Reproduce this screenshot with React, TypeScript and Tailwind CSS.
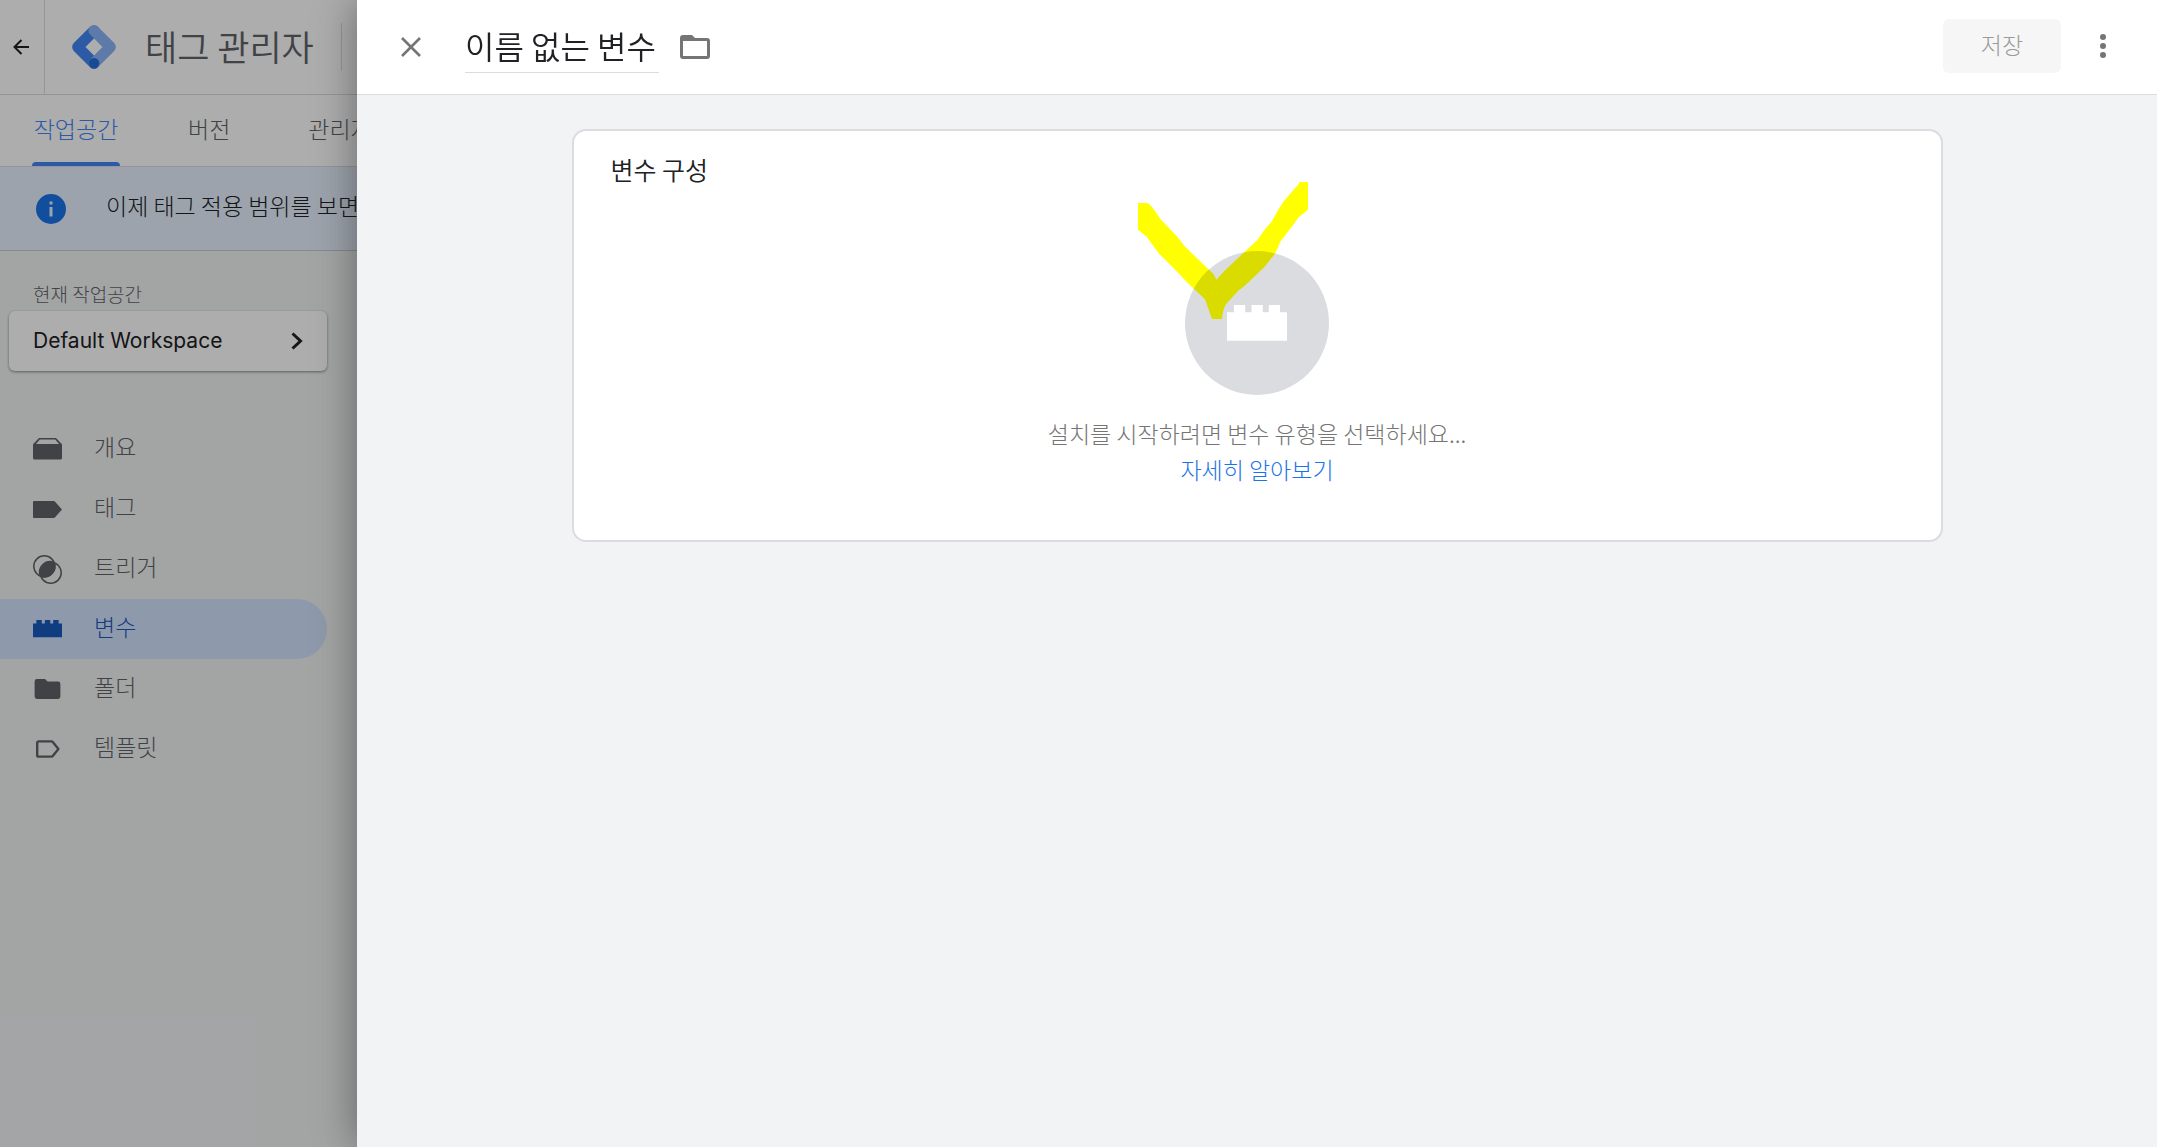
import { useState } from "react";
import type { ReactNode } from "react";

type navItem = {
    label : string,
    icon : ReactNode
}

const BrickIcon = ({ className } : { className : string }) => (
    <svg className={className} viewBox="0 0 181 108" fill="currentColor" aria-hidden="true">
        <path d="M0 22H21V0H55V22H74V0H108V22H126V0H160V22H181V108H0Z" />
    </svg>
)

const TagManagerLogo = () => (
    <svg className="size-11" viewBox="0 0 132 132" fill="none" strokeWidth="33" strokeLinecap="round" strokeLinejoin="round" aria-hidden="true">
        <path d="M66 17L17 66L66 115" stroke="#4285f4" />
        <path d="M66 17L115 66L66 115" stroke="#8ab4f8" />
        <circle cx="66" cy="115" r="16" fill="#246fdb" />
    </svg>
)

const navItems : navItem[] = [
    {
        label: "개요",
        icon: (
            <svg className="w-[29px]" viewBox="0 0 29 22" fill="currentColor" aria-hidden="true">
                <path d="M6 0H23L29 6.3V20a1.5 1.5 0 0 1-1.5 1.5h-26A1.5 1.5 0 0 1 0 20V6.3ZM6.8 1.5L3 6H26L22.2 1.5Z" fillRule="evenodd" />
            </svg>
        )
    },
    {
        label: "태그",
        icon: (
            <svg className="w-[29px]" viewBox="0 0 29 17" fill="currentColor" aria-hidden="true">
                <path d="M1 0H20.5a2 2 0 0 1 1.6.8L29 8.5L22.1 16.2a2 2 0 0 1-1.6.8H1a1 1 0 0 1-1-1V1a1 1 0 0 1 1-1Z" />
            </svg>
        )
    },
    {
        label: "트리거",
        icon: (
            <svg className="w-[29px]" viewBox="0 0 29 29" fill="none" stroke="currentColor" strokeWidth="1.5" aria-hidden="true">
                <circle cx="11.3" cy="11.3" r="10.5" />
                <circle cx="17.7" cy="17.7" r="10.5" />
                <path d="M7.4 21.1A10.5 10.5 0 0 1 21.1 7.4A10.5 10.5 0 0 1 7.4 21.1Z" fill="currentColor" />
            </svg>
        )
    },
    { label: "변수", icon: <BrickIcon className="w-[29px]" /> },
    {
        label: "폴더",
        icon: (
            <svg className="w-[29px]" viewBox="0 0 29 20" fill="currentColor" aria-hidden="true">
                <path d="M4 0H12L14.6 2.5H25a2.4 2.4 0 0 1 2.4 2.4V17.6A2.4 2.4 0 0 1 25 20H4a2.4 2.4 0 0 1-2.4-2.4V2.4A2.4 2.4 0 0 1 4 0Z" />
            </svg>
        )
    },
    {
        label: "템플릿",
        icon: (
            <svg className="w-[29px]" viewBox="0 0 29 18" fill="none" stroke="currentColor" strokeWidth="2.4" strokeLinejoin="round" aria-hidden="true">
                <path d="M5.6 1.4H18.4a2 2 0 0 1 1.6.8L25.4 9L20 15.8a2 2 0 0 1-1.6.8H5.6a1.4 1.4 0 0 1-1.4-1.4V2.8A1.4 1.4 0 0 1 5.6 1.4Z" />
            </svg>
        )
    }
]

const Workspace = () => {
    const [active, setActive] = useState("변수");

    return(
        <div className="relative w-[357px] shrink-0 overflow-hidden bg-[#f1f3f4] whitespace-nowrap">
            <header className="flex h-[95px] items-center border-b border-[#dadce0] bg-white">
                <button aria-label="뒤로" className="flex h-full w-[45px] shrink-0 items-center justify-center border-r border-[#dadce0] pr-0.5">
                    <svg className="size-4" viewBox="0 0 16 16" fill="none" stroke="#202124" strokeWidth="2" aria-hidden="true">
                        <path d="M16 8H1.5M8.5 1L1.5 8L8.5 15" />
                    </svg>
                </button>
                <div className="flex flex-1 items-center pl-[27px]">
                    <TagManagerLogo />
                    <span className="ml-[29px] pb-1 text-[35px] leading-none font-[350] text-[#5f6368]">태그 관리자</span>
                </div>
                <div className="mr-[15px] h-12 w-px bg-[#dadce0]"></div>
            </header>

            <nav className="flex h-[72px] items-stretch border-b border-[#dadce0] bg-white pl-8 text-[23px] font-light text-[#5f6368]">
                <a href="#workspace" className="flex w-[88px] shrink-0 flex-col items-center text-[#4285f4]">
                    <span className="flex flex-1 items-center">작업공간</span>
                    <span className="h-1 w-full rounded-t bg-[#4285f4]"></span>
                </a>
                <a href="#versions" className="ml-[68px] flex shrink-0 items-center pb-1">버전</a>
                <a href="#admin" className="ml-[78px] flex shrink-0 items-center pb-1">관리자</a>
            </nav>

            <div className="flex h-[84px] items-center border-b border-[#c6cbd3] bg-[#e8f0fe] pl-9">
                <svg className="size-[30px] shrink-0" viewBox="0 0 30 30" aria-hidden="true">
                    <circle cx="15" cy="15" r="15" fill="#1a73e8" />
                    <path d="M13.5 7.5h3v3h-3ZM13.5 13h3v9.5h-3Z" fill="#e8f0fe" />
                </svg>
                <p className="ml-10 pb-1.5 text-[23px] font-light text-[#202124]">이제 태그 적용 범위를 보면</p>
            </div>

            <div className="pt-7 pr-[30px]">
                <p className="pb-0.5 pl-[33px] text-[19px] leading-[30px] font-light text-[#5f6368]">현재 작업공간</p>
                <button className="ml-[9px] flex h-[60px] w-[318px] items-center justify-between rounded-md bg-white pr-6 pl-6 font-['Inter',sans-serif] text-[21px] text-[#202124] shadow-[0_1px_3px_rgba(60,64,67,0.6)]">
                    Default Workspace
                    <svg className="h-[18px] w-3" viewBox="0 0 12 18" fill="none" stroke="currentColor" strokeWidth="3" aria-hidden="true">
                        <path d="M1.5 1.5L9.5 9L1.5 16.5" />
                    </svg>
                </button>
                <ul className="mt-12">
                    {navItems.map((item) =>(
                        <li key={item.label}>
                            <button
                                className={`flex h-[60px] w-full items-center rounded-r-full pl-[33px] text-[23px] font-light ${item.label == active ? "bg-[#d2e3fc] text-[#185abc]" : "text-[#5f6368]"}`}
                                onClick={()=> setActive(item.label)}
                            >
                                {item.icon}
                                <span className="ml-8 pb-1.5">{item.label}</span>
                            </button>
                        </li>
                    ))}
                </ul>
            </div>

            {/* scrim behind the open sheet */}
            <div className="pointer-events-none absolute inset-0 bg-black/32"></div>
        </div>
    )
}

const VariableSheet = () => {
    const [name, setName] = useState("이름 없는 변수");

    return(
        <div role="dialog" aria-label="변수" className="relative flex min-w-0 flex-1 flex-col bg-[#f1f3f4] shadow-[0_0_40px_rgba(0,0,0,0.4)]">
            <header className="flex h-[95px] shrink-0 items-center border-b border-[#dadce0] bg-white pl-11">
                <button aria-label="닫기" className="text-[#757575]">
                    <svg className="size-5" viewBox="0 0 20 20" fill="none" stroke="currentColor" strokeWidth="2.6" aria-hidden="true">
                        <path d="M1 1L19 19M19 1L1 19" />
                    </svg>
                </button>
                <input
                    aria-label="변수 이름"
                    className="ml-11 h-[52px] w-[194px] border-b border-[#dadce0] pb-1 text-[32px] font-[350] text-[#202124] outline-none"
                    value={name}
                    onChange={(e)=> setName(e.target.value)}
                />
                <button aria-label="폴더" className="ml-[21px] text-[#757575]">
                    <svg className="h-6 w-[30px]" viewBox="0 0 30 24" fill="currentColor" aria-hidden="true">
                        <path d="M3 0H12L15 3H27a3 3 0 0 1 3 3V21a3 3 0 0 1-3 3H3a3 3 0 0 1-3-3V3A3 3 0 0 1 3 0ZM3 6V21H27V6Z" fillRule="evenodd" />
                    </svg>
                </button>
                <div className="mr-[45px] ml-auto flex items-center gap-[33px] pb-0.5">
                    <button disabled className="h-[54px] w-[118px] rounded-md bg-[#f6f6f6] pb-1 text-[23px] font-light text-[#9a9a9a]">저장</button>
                    <button aria-label="더보기" className="flex w-[18px] justify-center text-[#757575]">
                        <svg className="h-6 w-1.5" viewBox="0 0 6 24" fill="currentColor" aria-hidden="true">
                            <circle cx="3" cy="3" r="3" />
                            <circle cx="3" cy="12" r="3" />
                            <circle cx="3" cy="21" r="3" />
                        </svg>
                    </button>
                </div>
            </header>

            <main className="px-10 pt-[34px]">
                <section className="mx-auto flex max-w-[1371px] flex-col rounded-[14px] border-2 border-[#dadce0] bg-white px-[37px] pt-5 pb-[53px]">
                    <h2 className="text-[25px] leading-9 font-[350] text-[#202124]">변수 구성</h2>
                    <div className="mt-16 flex flex-col items-center text-[23px] leading-9 font-light">
                        <button aria-label="변수 유형 선택" className="relative flex size-36 items-center justify-center rounded-full bg-[#dadce0] text-white">
                            <BrickIcon className="w-[60px]" />
                            <svg className="pointer-events-none absolute -top-[69px] -left-[47px] h-[137px] w-[170px] mix-blend-multiply" viewBox="0 0 510 411" fill="#ffff00" aria-hidden="true">
                                <path d="M0 63H27Q36 66 46 80Q58 97 68 112L118 164L140 193L227 277L235 293L258 268L322 208L358 174L382 140L400 120L424 78L440 54L484 4V0H510V83L482 106L450 149L428 178L412 214L380 254L322 310L300 327L265 365Q254 382 252 411H222L201 352L150 304L110 262L62 214L26 164L0 143Z" />
                            </svg>
                        </button>
                        <p className="mt-5 text-[#757575]">설치를 시작하려면 변수 유형을 선택하세요...</p>
                        <a href="#learn" className="text-[#1a73e8]">자세히 알아보기</a>
                    </div>
                </section>
            </main>
        </div>
    )
}

const App = () => {
    return(
        <div className="flex min-h-screen overflow-hidden font-['Noto_Sans_CJK_KR',sans-serif]">
            <Workspace />
            <VariableSheet />
        </div>
    )
}
export default App;
